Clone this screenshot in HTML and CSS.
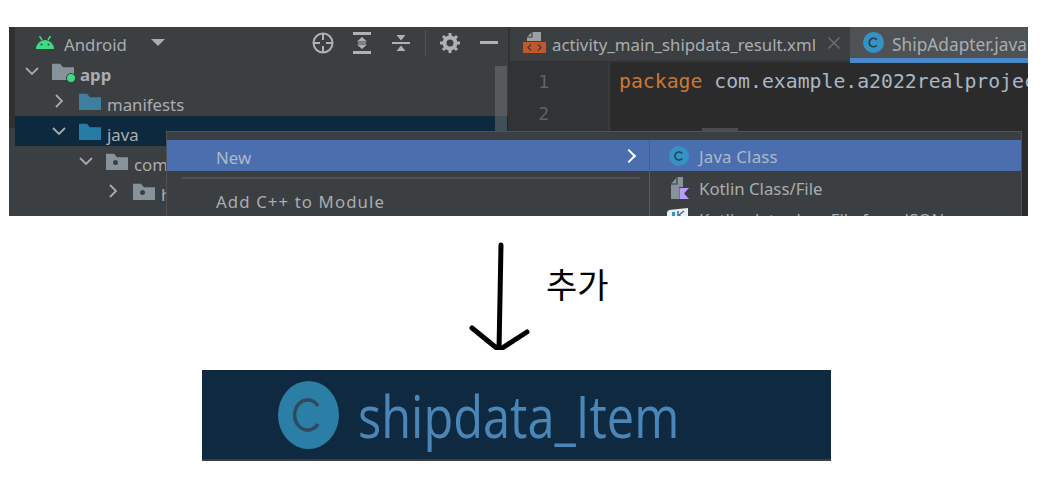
FILE: index.html
```html
<!DOCTYPE html>
<html lang="ko">

<head>
    <meta charset="UTF-8">
    <title>shipdata_Item</title>
    <link rel="stylesheet" href="styles.css">
</head>

<body>
    <svg class="defs" width="0" height="0">
        <symbol id="folder" viewBox="0 0 22 20" preserveAspectRatio="none">
            <path d="M0 1h8l3 4h11v15H0z"/>
        </symbol>
        <symbol id="chev-right" viewBox="0 0 14 14">
            <path d="M4 1l6 6-6 6" fill="none" stroke="#a7a9ab" stroke-width="1.8"/>
        </symbol>
        <symbol id="chev-down" viewBox="0 0 14 14">
            <path d="M1 4l6 6 6-6" fill="none" stroke="#a7a9ab" stroke-width="1.8"/>
        </symbol>
        <symbol id="class-c" viewBox="0 0 22 22">
            <circle cx="11" cy="11" r="11" fill="#3592c4"/>
            <path d="M14.500 8.200a4.500 4.500 0 1 0 0 5.600" fill="none" stroke="#2b3d4a" stroke-width="1.700"/>
        </symbol>
    </svg>

    <div class="ide">
        <div class="strip"></div>

        <div class="project">
            <div class="panel-head">
                <svg class="android" width="18" height="13" viewBox="0 0 18 13">
                    <path d="M0 13a9 9 0 0 1 18 0z" fill="#3ddc84"/>
                    <path d="M3.500 0l2.500 4M14.500 0l-2.500 4" stroke="#3ddc84" stroke-width="1.500"/>
                    <circle cx="5.500" cy="8.500" r="1" fill="#3c3f41"/>
                    <circle cx="12.500" cy="8.500" r="1" fill="#3c3f41"/>
                </svg>
                <span class="panel-title">Android</span>
                <span class="caret"></span>
                <div class="tools">
                    <svg width="22" height="22" viewBox="0 0 22 22" fill="none" stroke="#afb1b3" stroke-width="2">
                        <circle cx="11" cy="11" r="9.500"/>
                        <path d="M11 1v7M11 14v7M1 11h7M14 11h7"/>
                    </svg>
                    <svg class="expand" width="18" height="22" viewBox="0 0 18 22" fill="#afb1b3">
                        <path d="M0 0h18v3H0zM0 19h18v3H0z"/>
                        <path d="M9 5l5 4.500H4zM9 17l-5-4.500h10z"/>
                        <path d="M5 10.400h8v1.200H5z"/>
                    </svg>
                    <svg class="collapse" width="18" height="20" viewBox="0 0 18 20" fill="#afb1b3">
                        <path d="M0 9h18v2H0zM9 7.500L4.500 2h9zM9 12.500l4.500 5.500h-9z"/>
                    </svg>
                    <span class="tool-sep"></span>
                    <svg width="20" height="20" viewBox="0 0 20 20">
                        <circle cx="10" cy="10" r="5.500" fill="none" stroke="#afb1b3" stroke-width="4"/>
                        <path d="M10 0v4M10 16v4M0 10h4M16 10h4M3 3l3 3M14 14l3 3M17 3l-3 3M6 14l-3 3" stroke="#afb1b3" stroke-width="3"/>
                    </svg>
                    <span class="minus"></span>
                </div>
            </div>

            <div class="tree">
                <div class="row lv0">
                    <svg class="chev"><use href="#chev-down"/></svg>
                    <span class="ficon module">
                        <svg width="22" height="17" fill="#87939a"><use href="#folder"/></svg>
                        <span class="dot"></span>
                    </span>
                    <b>app</b>
                </div>
                <div class="row lv1">
                    <svg class="chev"><use href="#chev-right"/></svg>
                    <svg class="ficon" width="22" height="17" fill="#3d7f9c"><use href="#folder"/></svg>
                    <span>manifests</span>
                </div>
                <div class="row lv1 selected">
                    <svg class="chev"><use href="#chev-down"/></svg>
                    <svg class="ficon" width="22" height="17" fill="#277ca5"><use href="#folder"/></svg>
                    <span>java</span>
                </div>
                <div class="row lv2">
                    <svg class="chev"><use href="#chev-down"/></svg>
                    <span class="ficon pkg">
                        <svg width="22" height="17" fill="#87939a"><use href="#folder"/></svg>
                        <span class="pkg-dot"></span>
                    </span>
                    <span>com</span>
                </div>
                <div class="row lv3">
                    <svg class="chev"><use href="#chev-right"/></svg>
                    <span class="ficon pkg">
                        <svg width="22" height="17" fill="#87939a"><use href="#folder"/></svg>
                        <span class="pkg-dot"></span>
                    </span>
                    <span>h</span>
                </div>
            </div>
            <div class="scroll"></div>
        </div>

        <div class="editor">
            <div class="tabs">
                <div class="tab">
                    <svg width="23" height="23" viewBox="0 0 23 23">
                        <path d="M4 10V6l5-5h9v9z" fill="#9aa0a4"/>
                        <path d="M9 1v5H4" fill="none" stroke="#3c3f41" stroke-width="1.200"/>
                        <rect y="11" width="23" height="11" fill="#c4562a"/>
                        <path d="M8 13.500l-3 3 3 3M15 13.500l3 3-3 3" fill="none" stroke="#3c3f41" stroke-width="1.300"/>
                    </svg>
                    <span>activity_main_shipdata_result.xml</span>
                    <svg class="close" width="12" height="12" viewBox="0 0 12 12">
                        <path d="M.500.500l11 11M11.500.500l-11 11" stroke="#6e7173" stroke-width="1.300"/>
                    </svg>
                </div>
                <div class="tab active">
                    <svg width="21" height="21"><use href="#class-c"/></svg>
                    <span>ShipAdapter.java</span>
                </div>
            </div>
            <div class="code">
                <div class="gutter">
                    <div>1</div>
                    <div>2</div>
                </div>
                <div class="lines"><span class="kw">package</span> com.example.a2022realproject</div>
            </div>
        </div>

        <div class="menu-thumb"></div>
        <div class="menu">
            <div class="menu-main">
                <div class="item hot"><span>New</span><span class="arrow"></span></div>
                <div class="menu-sep"></div>
                <div class="item spaced"><span>Add C++ to Module</span></div>
            </div>
            <div class="menu-sub">
                <div class="item hot">
                    <svg width="20" height="20"><use href="#class-c"/></svg>
                    <span>Java Class</span>
                </div>
                <div class="item">
                    <svg width="20" height="23" viewBox="0 0 20 23">
                        <path d="M2 7l6-7h6v10h-4v12H2z" fill="#87939a"/>
                        <path d="M8 0v7H2" fill="none" stroke="#3c3f41" stroke-width="1.200"/>
                        <path d="M10.500 11H20l-5 5.500 5 5.500h-9.500z" fill="#b99bf8"/>
                    </svg>
                    <span>Kotlin Class/File</span>
                </div>
                <div class="item">
                    <svg class="json-icon" width="23" height="23" viewBox="0 0 23 23">
                        <path d="M2 2l19-2v23H0V4z" fill="#e8eef5"/>
                        <path d="M5 4h3v10H5z" fill="#3592c4"/>
                        <path d="M11 3v9M17 3l-5 4 5 5" fill="none" stroke="#3d6fa8" stroke-width="1.500"/>
                    </svg>
                    <span>Kotlin data class File from JSON</span>
                </div>
            </div>
        </div>
    </div>

    <div class="note">
        <svg class="down-arrow" width="70" height="120" viewBox="0 0 70 120">
            <path d="M36 15L34 120M7 98l27 22 28-18" fill="none" stroke="#000" stroke-width="5" stroke-linecap="round" stroke-linejoin="round"/>
        </svg>
        <span class="note-text">추가</span>
    </div>

    <div class="result">
        <svg class="result-icon" width="61" height="68" viewBox="0 0 61 68">
            <ellipse cx="30.500" cy="34" rx="30.500" ry="34" fill="#2b7ea6"/>
            <path d="M40 25a13 15 0 1 0 0 18" fill="none" stroke="#2f4a5c" stroke-width="3.500"/>
        </svg>
        <span class="result-name">shipdata_Item</span>
    </div>
</body>

</html>
```

FILE: styles.css
```css
body {
    margin: 0;
    background: #fff;
    font-family: "Noto Sans", sans-serif;
}

.defs {
    position: absolute;
}

.ide {
    position: relative;
    display: flex;
    width: 1019px;
    height: 189px;
    margin: 27px 0 0 9px;
    overflow: hidden;
    background: #3c3f41;
    color: #a9adb0;
    font-size: 16.800px;
}

.strip {
    flex: none;
    width: 6px;
    background: linear-gradient(#2f3031 0, #2f3031 101px, #3c3f41 101px);
}

/* project panel */
.project {
    position: relative;
    flex: none;
    width: 493px;
    border-right: 2px solid #323232;
}

.panel-head {
    display: flex;
    align-items: center;
    height: 29px;
    padding: 2px 10px 0 21px;
    box-sizing: border-box;
}

.panel-title {
    margin-left: 10px;
    padding-top: 4px;
}

.caret {
    width: 0;
    height: 0;
    margin-left: 24px;
    border-left: 7px solid transparent;
    border-right: 7px solid transparent;
    border-top: 7px solid #a9adb0;
}

.tools {
    display: flex;
    align-items: center;
    gap: 18px;
    margin-left: auto;
}

.tools svg {
    display: block;
}

.expand {
    margin-left: 1px;
}

.collapse {
    margin-left: 3px;
}

.tool-sep {
    width: 1px;
    height: 26px;
    margin: 0 -4px 0 -3px;
    background: #515151;
}

.minus {
    width: 18px;
    height: 3px;
    margin-left: 2px;
    background: #afb1b3;
}

.row {
    display: flex;
    align-items: center;
    height: 30px;
}

.row b {
    font-weight: 700;
}

.row > span:last-child,
.row > b {
    padding-top: 6px;
}

.lv0 { padding-left: 10px; }
.lv1 { padding-left: 37px; }
.lv2 { padding-left: 64px; }
.lv3 { padding-left: 91px; }

.selected {
    background: #0d293e;
}

.chev {
    flex: none;
    width: 14px;
    height: 14px;
    margin-top: -1px;
}

.ficon {
    position: relative;
    display: block;
    flex: none;
    width: 22px;
    height: 17px;
    margin: 0 6px 0 13px;
}

.ficon svg {
    display: block;
}

.dot {
    position: absolute;
    right: -2px;
    bottom: -3px;
    width: 8px;
    height: 8px;
    border: 1px solid #3c3f41;
    border-radius: 50%;
    background: #3ddc84;
}

.pkg-dot {
    position: absolute;
    left: 7px;
    top: 7px;
    width: 5px;
    height: 5px;
    border-radius: 50%;
    background: #3c3f41;
}

.scroll {
    position: absolute;
    top: 39px;
    right: 1px;
    width: 12px;
    height: 70px;
    background: rgba(110, 112, 114, .55);
}

/* editor */
.editor {
    flex: 1;
    min-width: 0;
    background: #2b2b2b;
}

.tabs {
    display: flex;
    height: 36px;
    background: #3c3f41;
    box-sizing: border-box;
    border-bottom: 2px solid #323232;
}

.tab {
    display: flex;
    flex: none;
    align-items: center;
    gap: 6px;
    height: 31px;
    padding-left: 13px;
    white-space: nowrap;
}

.tab > span {
    padding-top: 3px;
}

.close {
    margin: 0 10px 0 6px;
}

.tab.active {
    width: 166px;
    gap: 8px;
    background: #4e5254;
    border-bottom: 5px solid #4a88c7;
    font-size: 17.300px;
}

.code {
    display: flex;
    height: 153px;
}

.gutter {
    flex: none;
    width: 39px;
    padding: 3px 59px 0 0;
    border-right: 2px solid #3a3a3a;
    background: #313335;
    color: #606366;
    font-family: "DejaVu Sans Mono", monospace;
    font-size: 18px;
    line-height: 32px;
    text-align: right;
}

.lines {
    padding: 3px 0 0 9px;
    color: #a9b7c6;
    font-family: "DejaVu Sans Mono", monospace;
    font-size: 19.800px;
    line-height: 32px;
    white-space: nowrap;
}

.kw {
    color: #cc7832;
}

/* context menu */
.menu-thumb {
    position: absolute;
    top: 101px;
    left: 693px;
    width: 36px;
    height: 3px;
    background: #4a4c4e;
}

.menu {
    position: absolute;
    top: 104px;
    left: 157px;
    display: flex;
    width: 854px;
    height: 100px;
    padding-top: 8px;
    border: 1px solid #515151;
    background: #3c3f41;
}

.menu-main {
    flex: none;
    width: 482px;
}

.menu-sub {
    flex: 1;
    border-left: 1px solid #5a5d5f;
}

.item {
    display: flex;
    align-items: center;
    gap: 12px;
    height: 31px;
    padding-left: 49px;
    white-space: nowrap;
}

.spaced {
    letter-spacing: 1.100px;
}

.menu-main .item > span:first-child {
    padding-top: 4px;
}

.menu-sub .item {
    padding-left: 19px;
    gap: 10px;
    height: 35px;
}

.menu-sub .hot {
    height: 31px;
}

.menu-sub .hot span {
    padding-top: 2px;
    letter-spacing: .2px;
}

.menu-sub .item:last-child {
    height: 26px;
}

.json-icon {
    flex: none;
    margin: 0 -1px 0 -2px;
}

.hot {
    background: #4b6eaf;
    color: #afb8c7;
}

.menu-sep {
    height: 2px;
    margin: 6px 9px 5px 15px;
    background: #515151;
}

.arrow {
    width: 8px;
    height: 8px;
    margin-left: auto;
    margin-right: 15px;
    border-top: 2px solid #fff;
    border-right: 2px solid #fff;
    transform: rotate(45deg);
}

/* arrow between the two shots */
.note {
    display: flex;
    height: 154px;
    padding-left: 465px;
    box-sizing: border-box;
}

.down-arrow {
    flex: none;
    margin-top: 14px;
}

.note-text {
    margin: 43px 0 0 11px;
    font-family: "Noto Sans CJK KR", sans-serif;
    font-size: 34px;
    line-height: 50px;
    color: #000;
}

/* enlarged file name */
.result {
    display: flex;
    align-items: center;
    width: 629px;
    height: 91px;
    margin-left: 202px;
    padding-left: 76px;
    box-sizing: border-box;
    border-bottom: 2px solid #3c3f41;
    background: #0f2a40;
}

.result-icon {
    flex: none;
    filter: blur(.6px);
}

.result-name {
    margin-left: 19px;
    padding-top: 3px;
    color: #4a86b8;
    font-family: "Open Sans", sans-serif;
    font-size: 58px;
    line-height: 60px;
    white-space: nowrap;
    transform: scaleX(.84);
    transform-origin: left center;
    filter: blur(.6px);
}
```
